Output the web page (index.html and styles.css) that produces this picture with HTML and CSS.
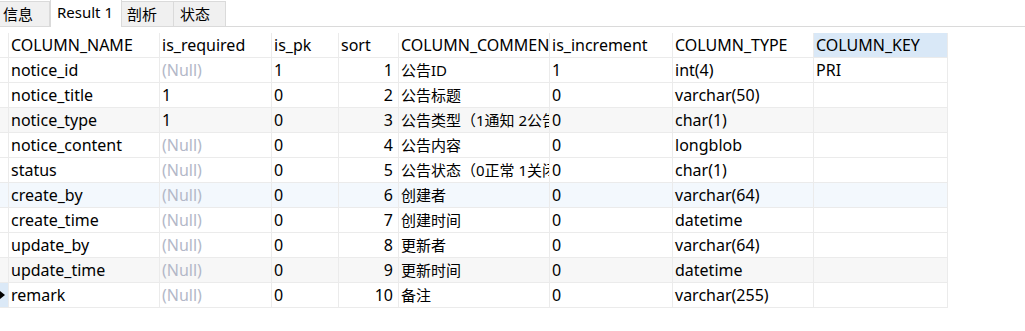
FILE: index.html
```html
<!DOCTYPE html>
<html lang="zh-CN">
<head>
<meta charset="utf-8">
<title>Result 1</title>
<link rel="stylesheet" href="styles.css">
</head>
<body>
<div class="tabs">
  <div class="tab first zh">信息</div>
  <div class="tab active">Result 1</div>
  <div class="tab zh">剖析</div>
  <div class="tab zh">状态</div>
  <div class="tab-fill"></div>
</div>
<div class="grid">
  <div class="row head">
    <div class="cell gut"></div>
    <div class="cell">COLUMN_NAME</div>
    <div class="cell">is_required</div>
    <div class="cell">is_pk</div>
    <div class="cell">sort</div>
    <div class="cell">COLUMN_COMMENT</div>
    <div class="cell">is_increment</div>
    <div class="cell">COLUMN_TYPE</div>
    <div class="cell sel">COLUMN_KEY</div>
  </div>
  <div class="row">
    <div class="cell gut"></div>
    <div class="cell">notice_id</div>
    <div class="cell null">(Null)</div>
    <div class="cell">1</div>
    <div class="cell num">1</div>
    <div class="cell zh">公告ID</div>
    <div class="cell">1</div>
    <div class="cell">int(4)</div>
    <div class="cell">PRI</div>
  </div>
  <div class="row">
    <div class="cell gut"></div>
    <div class="cell">notice_title</div>
    <div class="cell">1</div>
    <div class="cell">0</div>
    <div class="cell num">2</div>
    <div class="cell zh">公告标题</div>
    <div class="cell">0</div>
    <div class="cell">varchar(50)</div>
    <div class="cell"></div>
  </div>
  <div class="row alt">
    <div class="cell gut"></div>
    <div class="cell">notice_type</div>
    <div class="cell">1</div>
    <div class="cell">0</div>
    <div class="cell num">3</div>
    <div class="cell zh">公告类型（1通知 2公告）</div>
    <div class="cell">0</div>
    <div class="cell">char(1)</div>
    <div class="cell"></div>
  </div>
  <div class="row">
    <div class="cell gut"></div>
    <div class="cell">notice_content</div>
    <div class="cell null">(Null)</div>
    <div class="cell">0</div>
    <div class="cell num">4</div>
    <div class="cell zh">公告内容</div>
    <div class="cell">0</div>
    <div class="cell">longblob</div>
    <div class="cell"></div>
  </div>
  <div class="row">
    <div class="cell gut"></div>
    <div class="cell">status</div>
    <div class="cell null">(Null)</div>
    <div class="cell">0</div>
    <div class="cell num">5</div>
    <div class="cell zh">公告状态（0正常 1关闭）</div>
    <div class="cell">0</div>
    <div class="cell">char(1)</div>
    <div class="cell"></div>
  </div>
  <div class="row hover">
    <div class="cell gut"></div>
    <div class="cell">create_by</div>
    <div class="cell null">(Null)</div>
    <div class="cell">0</div>
    <div class="cell num">6</div>
    <div class="cell zh">创建者</div>
    <div class="cell">0</div>
    <div class="cell">varchar(64)</div>
    <div class="cell"></div>
  </div>
  <div class="row">
    <div class="cell gut"></div>
    <div class="cell">create_time</div>
    <div class="cell null">(Null)</div>
    <div class="cell">0</div>
    <div class="cell num">7</div>
    <div class="cell zh">创建时间</div>
    <div class="cell">0</div>
    <div class="cell">datetime</div>
    <div class="cell"></div>
  </div>
  <div class="row">
    <div class="cell gut"></div>
    <div class="cell">update_by</div>
    <div class="cell null">(Null)</div>
    <div class="cell">0</div>
    <div class="cell num">8</div>
    <div class="cell zh">更新者</div>
    <div class="cell">0</div>
    <div class="cell">varchar(64)</div>
    <div class="cell"></div>
  </div>
  <div class="row alt">
    <div class="cell gut"></div>
    <div class="cell">update_time</div>
    <div class="cell null">(Null)</div>
    <div class="cell">0</div>
    <div class="cell num">9</div>
    <div class="cell zh">更新时间</div>
    <div class="cell">0</div>
    <div class="cell">datetime</div>
    <div class="cell"></div>
  </div>
  <div class="row current">
    <div class="cell gut"><span class="arrow"></span></div>
    <div class="cell">remark</div>
    <div class="cell null">(Null)</div>
    <div class="cell">0</div>
    <div class="cell num">10</div>
    <div class="cell zh">备注</div>
    <div class="cell">0</div>
    <div class="cell">varchar(255)</div>
    <div class="cell"></div>
  </div>
</div>
</body>
</html>
```

FILE: styles.css
```css
html, body {
  margin: 0;
  padding: 0;
  background: #ffffff;
}
body {
  font-family: "Noto Sans", "Noto Sans CJK SC", sans-serif;
  font-size: 16px;
  color: #000000;
  width: 1025px;
  height: 331px;
  overflow: hidden;
}
.zh {
  font-size: 15px;
}

/* tabs */
.tabs {
  display: flex;
  align-items: flex-end;
  height: 27px;
  margin-bottom: 6px;
}
.tab {
  box-sizing: border-box;
  height: 26px;
  line-height: 24px;
  padding: 0 7px;
  background: #f0f0f0;
  border: 1px solid #dadada;
  border-left: none;
  border-bottom: 1px solid #dadada;
  white-space: nowrap;
}
.tab.first {
  width: 50px;
  padding-left: 3px;
  border-left: none;
}
.tab.active {
  height: 27px;
  width: 72px;
  background: #ffffff;
  border-top: none;
  border-left: 1px solid #dadada;
  border-bottom: none;
  font-size: 15px;
  line-height: 24px;
  padding-left: 6px;
}
.tab:nth-child(3) {
  width: 52px;
  padding-left: 5px;
}
.tab:nth-child(4) {
  width: 52px;
  padding-left: 6px;
}
.tab-fill {
  flex: 1;
  height: 26px;
  box-sizing: border-box;
  border-bottom: 1px solid #dadada;
}

/* grid */
.row {
  display: grid;
  grid-template-columns: 9px 151px 112px 67px 60px 151px 123px 141px 134px;
  height: 25px;
}
.cell {
  box-sizing: border-box;
  height: 25px;
  line-height: 24px;
  padding: 0 2px;
  border-right: 1px solid #ebebeb;
  border-bottom: 1px solid #ebebeb;
  white-space: nowrap;
  overflow: hidden;
}
.cell.gut {
  padding: 0;
  position: relative;
}
.cell.num {
  text-align: right;
  padding-right: 5px;
}
.cell.null {
  color: #b3b8c8;
}
.head .cell.sel {
  background: #d9e8f7;
}
.row.alt .cell {
  background: #f7f7f7;
}
.row.hover .cell {
  background: #f3f8fd;
}
.row.current .cell.gut {
  background: #dbe9f7;
}
.arrow {
  position: absolute;
  left: 0;
  top: 8px;
  width: 0;
  height: 0;
  border-top: 4px solid transparent;
  border-bottom: 4px solid transparent;
  border-left: 5px solid #000000;
}
```
